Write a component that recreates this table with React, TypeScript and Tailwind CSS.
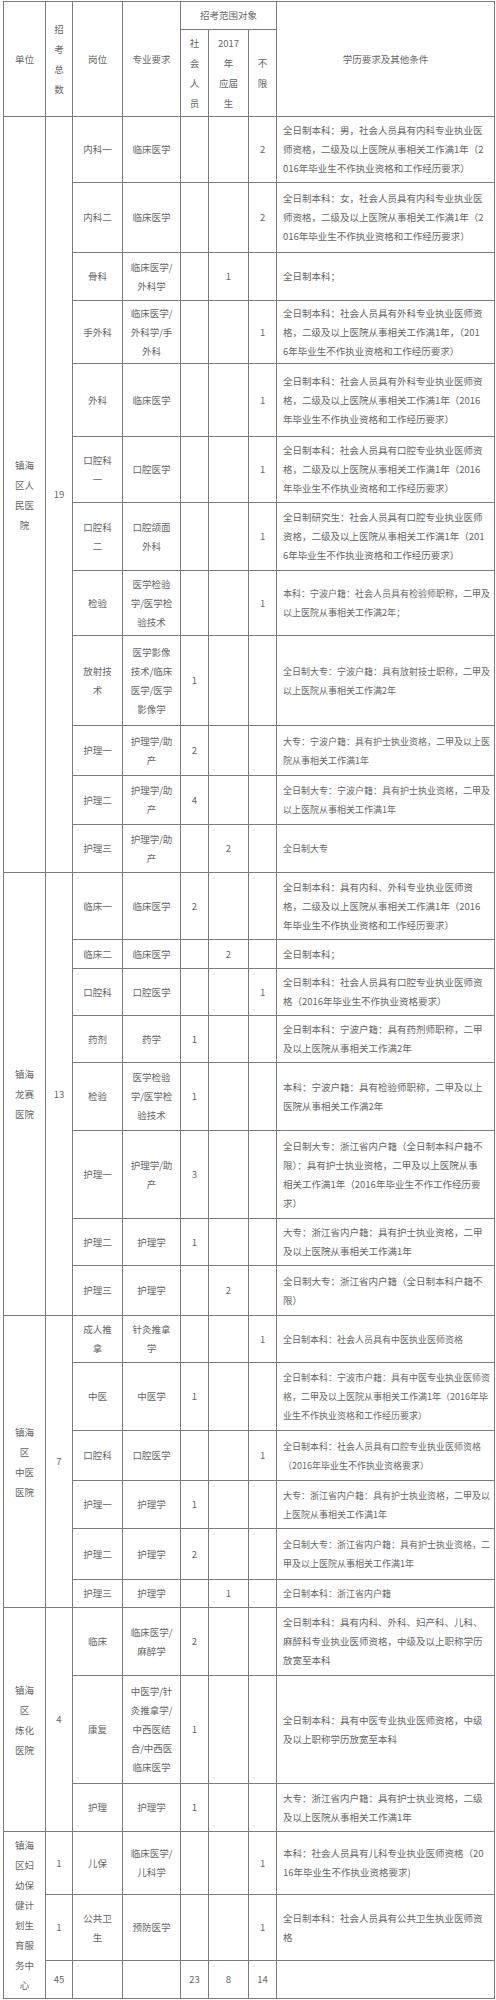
import React from "react";

type Row = {
  post: string[];
  major: string[];
  a?: string;
  b?: string;
  c?: string;
  req: string[];
  h: string;
  sm?: boolean;
  count?: string;
};

type Section = {
  unit: string[];
  total?: string;
  rows: Row[];
};

const sections: Section[] = [
  {
    unit: ["镇海", "区人", "民医", "院"],
    total: "19",
    rows: [
      {
        post: ["内科一"],
        major: ["临床医学"],
        c: "2",
        req: ["全日制本科：男，社会人员具有内科专业执业医", "师资格，二级及以上医院从事相关工作满1年（2", "016年毕业生不作执业资格和工作经历要求）"],
        h: "h-[66px]",
      },
      {
        post: ["内科二"],
        major: ["临床医学"],
        c: "2",
        req: ["全日制本科：女，社会人员具有内科专业执业医", "师资格，二级及以上医院从事相关工作满1年（2", "016年毕业生不作执业资格和工作经历要求）"],
        h: "h-[70px]",
      },
      { post: ["骨科"], major: ["临床医学/", "外科学"], b: "1", req: ["全日制本科；"], h: "h-[48px]" },
      {
        post: ["手外科"],
        major: ["临床医学/", "外科学/手", "外科"],
        c: "1",
        req: ["全日制本科：社会人员具有外科专业执业医师资", "格，二级及以上医院从事相关工作满1年，（201", "6年毕业生不作执业资格和工作经历要求）"],
        h: "h-[63px]",
      },
      {
        post: ["外科"],
        major: ["临床医学"],
        c: "1",
        req: ["全日制本科：社会人员具有外科专业执业医师资", "格，二级及以上医院从事相关工作满1年（2016", "年毕业生不作执业资格和工作经历要求）"],
        h: "h-[73px]",
      },
      {
        post: ["口腔科", "一"],
        major: ["口腔医学"],
        c: "1",
        req: ["全日制本科：社会人员具有口腔专业执业医师资", "格，二级及以上医院从事相关工作满1年（2016", "年毕业生不作执业资格和工作经历要求）"],
        h: "h-[66px]",
      },
      {
        post: ["口腔科", "二"],
        major: ["口腔颌面", "外科"],
        c: "1",
        req: ["全日制研究生：社会人员具有口腔专业执业医师", "资格，二级及以上医院从事相关工作满1年（201", "6年毕业生不作执业资格和工作经历要求）"],
        h: "h-[68px]",
      },
      {
        post: ["检验"],
        major: ["医学检验", "学/医学检", "验技术"],
        c: "1",
        req: ["本科：宁波户籍：社会人员具有检验师职称，二甲及", "以上医院从事相关工作满2年；"],
        h: "h-[65px]",
        sm: true,
      },
      {
        post: ["放射技", "术"],
        major: ["医学影像", "技术/临床", "医学/医学", "影像学"],
        a: "1",
        req: ["全日制大专：宁波户籍：具有放射技士职称，二甲及", "以上医院从事相关工作满2年"],
        h: "h-[90px]",
        sm: true,
      },
      {
        post: ["护理一"],
        major: ["护理学/助", "产"],
        a: "2",
        req: ["大专：宁波户籍：具有护士执业资格，二甲及以上医", "院从事相关工作满1年"],
        h: "h-[50px]",
        sm: true,
      },
      {
        post: ["护理二"],
        major: ["护理学/助", "产"],
        a: "4",
        req: ["全日制大专：宁波户籍：具有护士执业资格，二甲及", "以上医院从事相关工作满1年"],
        h: "h-[49px]",
        sm: true,
      },
      { post: ["护理三"], major: ["护理学/助", "产"], b: "2", req: ["全日制大专"], h: "h-[48px]", sm: true },
    ],
  },
  {
    unit: ["镇海", "龙赛", "医院"],
    total: "13",
    rows: [
      {
        post: ["临床一"],
        major: ["临床医学"],
        a: "2",
        req: ["全日制本科：具有内科、外科专业执业医师资", "格，二级及以上医院从事相关工作满1年（2016", "年毕业生不作执业资格和工作经历要求）"],
        h: "h-[67px]",
      },
      { post: ["临床二"], major: ["临床医学"], b: "2", req: ["全日制本科；"], h: "h-[29px]" },
      {
        post: ["口腔科"],
        major: ["口腔医学"],
        c: "1",
        req: ["全日制本科：社会人员具有口腔专业执业医师资", "格（2016年毕业生不作执业资格要求）"],
        h: "h-[47px]",
      },
      {
        post: ["药剂"],
        major: ["药学"],
        a: "1",
        req: ["全日制本科：宁波户籍：具有药剂师职称，二甲", "及以上医院从事相关工作满2年"],
        h: "h-[47px]",
      },
      {
        post: ["检验"],
        major: ["医学检验", "学/医学检", "验技术"],
        a: "1",
        req: ["本科：宁波户籍：具有检验师职称，二甲及以上", "医院从事相关工作满2年"],
        h: "h-[68px]",
      },
      {
        post: ["护理一"],
        major: ["护理学/助", "产"],
        a: "3",
        req: ["全日制大专：浙江省内户籍（全日制本科户籍不", "限）：具有护士执业资格，二甲及以上医院从事", "相关工作满1年（2016年毕业生不作工作经历要", "求）"],
        h: "h-[88px]",
      },
      {
        post: ["护理二"],
        major: ["护理学"],
        a: "1",
        req: ["大专：浙江省内户籍：具有护士执业资格，二甲", "及以上医院从事相关工作满1年"],
        h: "h-[47px]",
      },
      {
        post: ["护理三"],
        major: ["护理学"],
        b: "2",
        req: ["全日制大专：浙江省内户籍（全日制本科户籍不", "限）"],
        h: "h-[50px]",
      },
    ],
  },
  {
    unit: ["镇海", "区", "中医", "医院"],
    total: "7",
    rows: [
      {
        post: ["成人推", "拿"],
        major: ["针灸推拿", "学"],
        c: "1",
        req: ["全日制本科：社会人员具有中医执业医师资格"],
        h: "h-[47px]",
        sm: true,
      },
      {
        post: ["中医"],
        major: ["中医学"],
        a: "1",
        req: ["全日制本科：宁波市户籍：具有中医专业执业医师资", "格，二甲及以上医院从事相关工作满1年（2016年毕", "业生不作执业资格和工作经历要求）"],
        h: "h-[68px]",
        sm: true,
      },
      {
        post: ["口腔科"],
        major: ["口腔医学"],
        c: "1",
        req: ["全日制本科：社会人员具有口腔专业执业医师资格", "（2016年毕业生不作执业资格要求）"],
        h: "h-[50px]",
        sm: true,
      },
      {
        post: ["护理一"],
        major: ["护理学"],
        a: "1",
        req: ["大专：浙江省内户籍：具有护士执业资格，二甲及以", "上医院从事相关工作满1年"],
        h: "h-[48px]",
        sm: true,
      },
      {
        post: ["护理二"],
        major: ["护理学"],
        a: "2",
        req: ["全日制大专：浙江省内户籍：具有护士执业资格，二", "甲及以上医院从事相关工作满1年"],
        h: "h-[51px]",
        sm: true,
      },
      { post: ["护理三"], major: ["护理学"], b: "1", req: ["全日制本科：浙江省内户籍"], h: "h-[28px]", sm: true },
    ],
  },
  {
    unit: ["镇海", "区", "炼化", "医院"],
    total: "4",
    rows: [
      {
        post: ["临床"],
        major: ["临床医学/", "麻醉学"],
        a: "2",
        req: ["全日制本科：具有内科、外科、妇产科、儿科、", "麻醉科专业执业医师资格，中级及以上职称学历", "放宽至本科"],
        h: "h-[68px]",
      },
      {
        post: ["康复"],
        major: ["中医学/针", "灸推拿学/", "中西医结", "合/中西医", "临床医学"],
        a: "1",
        req: ["全日制本科：具有中医专业执业医师资格，中级", "及以上职称学历放宽至本科"],
        h: "h-[108px]",
      },
      {
        post: ["护理"],
        major: ["护理学"],
        a: "1",
        req: ["大专：浙江省内户籍：具有护士执业资格，二级", "及以上医院从事相关工作满1年"],
        h: "h-[48px]",
      },
    ],
  },
];

const mchRows: Row[] = [
  {
    count: "1",
    post: ["儿保"],
    major: ["临床医学/", "儿科学"],
    c: "1",
    req: ["本科：社会人员具有儿科专业执业医师资格（20", "16年毕业生不作执业资格要求)"],
    h: "h-[63px]",
  },
  {
    count: "1",
    post: ["公共卫", "生"],
    major: ["预防医学"],
    c: "1",
    req: ["全日制本科：社会人员具有公共卫生执业医师资", "格"],
    h: "h-[66px]",
  },
];

const cell = "border border-[#7c7c7c] p-0 align-middle text-center";
const reqCell = "border border-[#7c7c7c] p-0 pl-[6px] align-middle text-left";

function Lines({ lines, leading = "leading-[19px]" }: { lines: string[]; leading?: string }) {
  return (
    <>
      {lines.map((l, i) => (
        <div key={i} className={`whitespace-nowrap ${leading}`}>
          {l}
        </div>
      ))}
    </>
  );
}

function BodyRow({ row, lead }: { row: Row; lead?: React.ReactNode }) {
  return (
    <tr className={row.h}>
      {lead}
      <td className={cell}>
        <Lines lines={row.post} />
      </td>
      <td className={cell}>
        <Lines lines={row.major} />
      </td>
      <td className={cell}>{row.a}</td>
      <td className={cell}>{row.b}</td>
      <td className={cell}>{row.c}</td>
      <td className={`${reqCell} ${row.sm ? "text-[9px]" : "text-[9.5px]"}`}>
        <Lines lines={row.req} />
      </td>
    </tr>
  );
}

export default function App() {
  return (
    <div className="min-h-[2000px] w-[496px] bg-white pt-[1px] font-['Noto_Sans_CJK_SC','Noto_Sans',sans-serif] text-[9.5px] text-[#666]">
      <table className="ml-[3px] w-[491px] table-fixed border-collapse">
        <colgroup>
          <col className="w-[42px]" />
          <col className="w-[27px]" />
          <col className="w-[50px]" />
          <col className="w-[58px]" />
          <col className="w-[28px]" />
          <col className="w-[40px]" />
          <col className="w-[28px]" />
          <col className="w-[218px]" />
        </colgroup>
        <thead>
          <tr className="h-[28px]">
            <th rowSpan={2} className={`${cell} font-normal`}>
              单位
            </th>
            <th rowSpan={2} className={`${cell} font-normal`}>
              <Lines lines={["招", "考", "总", "数"]} leading="leading-[20px]" />
            </th>
            <th rowSpan={2} className={`${cell} font-normal`}>
              岗位
            </th>
            <th rowSpan={2} className={`${cell} font-normal`}>
              专业要求
            </th>
            <th colSpan={3} className={`${cell} font-normal`}>
              招考范围对象
            </th>
            <th rowSpan={2} className={`${cell} font-normal`}>
              学历要求及其他条件
            </th>
          </tr>
          <tr className="h-[87px]">
            <th className={`${cell} font-normal`}>
              <Lines lines={["社", "会", "人", "员"]} leading="leading-[20px]" />
            </th>
            <th className={`${cell} font-normal`}>
              <Lines lines={["2017", "年", "应届", "生"]} leading="leading-[20px]" />
            </th>
            <th className={`${cell} font-normal`}>
              <Lines lines={["不", "限"]} leading="leading-[20px]" />
            </th>
          </tr>
        </thead>
        <tbody>
          {sections.map((s, si) =>
            s.rows.map((r, ri) => (
              <BodyRow
                key={`${si}-${ri}`}
                row={r}
                lead={
                  ri === 0 ? (
                    <>
                      <td rowSpan={s.rows.length} className={cell}>
                        <Lines lines={s.unit} leading="leading-[20px]" />
                      </td>
                      <td rowSpan={s.rows.length} className={cell}>
                        {s.total}
                      </td>
                    </>
                  ) : null
                }
              />
            ))
          )}
          {mchRows.map((r, ri) => (
            <BodyRow
              key={`m-${ri}`}
              row={r}
              lead={
                <>
                  {ri === 0 && (
                    <td rowSpan={3} className={cell}>
                      <Lines lines={["镇海", "区妇", "幼保", "健计", "划生", "育服", "务中", "心"]} leading="leading-[20px]" />
                    </td>
                  )}
                  <td className={cell}>{r.count}</td>
                </>
              }
            />
          ))}
          <tr className="h-[38px]">
            <td className={cell}>45</td>
            <td className={cell}></td>
            <td className={cell}></td>
            <td className={cell}>23</td>
            <td className={cell}>8</td>
            <td className={cell}>14</td>
            <td className={reqCell}></td>
          </tr>
        </tbody>
      </table>
    </div>
  );
}
